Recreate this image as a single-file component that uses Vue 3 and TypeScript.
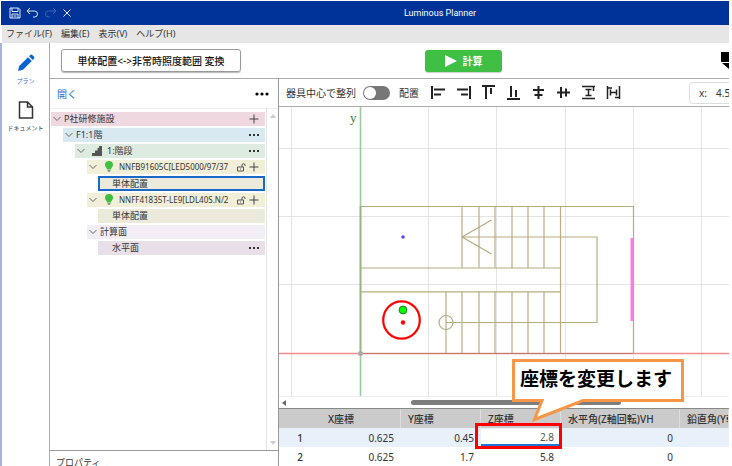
<script setup lang="ts">
import { ref } from 'vue'

interface TreeRow {
  label: string
  kind: string
  indent: number
  arrow?: boolean
  icon?: 'stairs' | 'bulb'
  lock?: boolean
  action?: 'plus' | 'dots'
}

const menus = ['ファイル(F)', '編集(E)', '表示(V)', 'ヘルプ(H)']

const tree: TreeRow[] = [
  { label: 'P社研修施設', kind: 'site', indent: 0, arrow: true, action: 'plus' },
  { label: 'F1:1階', kind: 'floor', indent: 1, arrow: true, action: 'dots' },
  { label: '1:階段', kind: 'room', indent: 2, arrow: true, icon: 'stairs', action: 'dots' },
  { label: 'NNFB91605C[LED5000/97/37', kind: 'lamp', indent: 3, arrow: true, icon: 'bulb', lock: true, action: 'plus' },
  { label: '単体配置', kind: 'single selected', indent: 4 },
  { label: 'NNFF41835T-LE9[LDL40S.N/2', kind: 'lamp', indent: 3, arrow: true, icon: 'bulb', lock: true, action: 'plus' },
  { label: '単体配置', kind: 'single', indent: 4 },
  { label: '計算面', kind: 'calc', indent: 3, arrow: true },
  { label: '水平面', kind: 'plane', indent: 4, action: 'dots' },
]

const aligns = [
  { name: '左揃え', d: 'M1 1v13M3 4.5h11M3 9.5h7' },
  { name: '右揃え', d: 'M14 1v13M1 4.5h11M5 9.5h7' },
  { name: '上揃え', d: 'M1 1h13M5 2v12M10 3v6' },
  { name: '下揃え', d: 'M1 14h13M5 1v11M10 5v7' },
  { name: '左右中央揃え', d: 'M7.5 1v13M2 5h11M3.500 10h8' },
  { name: '上下中央揃え', d: 'M1 7.5h13M5 2v11M10 3.500v8' },
  { name: '上下等間隔', d: 'M1 1.500h13M1 13.500h13M7.500 4v7M4.500 4.500h6M4.500 10.500h6M12.500 2v4' },
  { name: '左右等間隔', d: 'M1.500 1v13M13.500 1v13M4 7.500h7M4.500 4.500v6M10.500 4.500v6M2 3h4M9 12.500h4' },
]

const gridX = [13, 150, 218, 287, 355, 423]
const gridY = [42, 110, 178]
const upperSteps = [183, 200, 216, 233, 249, 265]
const lowerSteps = [167, 183, 200, 216, 233, 249, 265]

const centerAlign = ref(false)
const zValue = ref('2.8')
</script>

<template>
  <div class="app">
    <header class="titlebar">
      <div class="quick">
        <button aria-label="保存">
          <svg width="12" height="12" viewBox="0 0 12 12"><path d="M1 1h8.500L11 2.500V11H1zM3 1v3.500h6V1M3 11V7h6v4M4.500 9h3" /></svg>
        </button>
        <button aria-label="元に戻す">
          <svg width="13" height="12" viewBox="0 0 13 12"><path d="M4 1L1 4l3 3M1 4h7.500a3 3 0 0 1 0 6H7" /></svg>
        </button>
        <button aria-label="やり直し" disabled>
          <svg width="13" height="12" viewBox="0 0 13 12"><path d="M9 1l3 3-3 3M12 4H4.500a3 3 0 0 0 0 6H6" /></svg>
        </button>
        <button aria-label="閉じる">
          <svg width="10" height="12" viewBox="0 0 10 12"><path d="M1.500 2.500l7 7M8.500 2.500l-7 7" /></svg>
        </button>
      </div>
      <h1>Luminous Planner</h1>
    </header>

    <nav class="menubar">
      <button v-for="m in menus" :key="m">{{ m }}</button>
    </nav>

    <div class="body">
      <aside class="rail">
        <button class="rail-item active">
          <svg width="18" height="18" viewBox="0 0 18 18"><path d="M1 17l1.200-5L11 3.200 14.800 7 6 15.800zM12 2.200l1.200-1.200q1-1 2 0l1.800 1.800q1 1 0 2L15.800 6z" fill="#0b63d1" /></svg>
          <span>プラン</span>
        </button>
        <button class="rail-item">
          <svg width="16" height="18" viewBox="0 0 16 18"><path d="M1.500 1h8L14.500 6v11h-13zM9.500 1v5h5" fill="none" stroke="#333" stroke-width="1.500" /></svg>
          <span>ドキュメント</span>
        </button>
      </aside>

      <div class="work">
        <div class="actions">
          <button class="convert">単体配置&lt;-&gt;非常時照度範囲 変換</button>
          <button class="calc-btn">
            <svg width="12" height="12" viewBox="0 0 12 12"><path d="M0 0l12 6-12 6z" fill="#fff" /></svg>
            計算
          </button>
          <svg class="tag" width="8" height="17" viewBox="0 0 8 17"><path d="M0 0h8v10H0zM1 11h7v6z" /></svg>
        </div>

        <div class="panes">
          <section class="explorer">
            <div class="explorer-head">
              <a href="#open">開く</a>
              <button class="more" aria-label="その他">
                <svg width="14" height="4" viewBox="0 0 14 4"><circle cx="2" cy="2" r="1.600" /><circle cx="7" cy="2" r="1.600" /><circle cx="12" cy="2" r="1.600" /></svg>
              </button>
            </div>
            <div class="tree-wrap">
              <ul class="tree">
                <li v-for="(row, i) in tree" :key="i" :class="['row', 'level-' + row.indent, ...row.kind.split(' ')]">
                  <svg v-if="row.arrow" class="chev" width="8" height="6" viewBox="0 0 8 6"><path d="M.5 1L4 4.500 7.500 1" /></svg>
                  <svg v-if="row.icon === 'stairs'" class="row-icon" width="10" height="10" viewBox="0 0 10 10"><path d="M0 10V7h3V4.500h2.500V2H7V0h3v10z" fill="#555" /></svg>
                  <svg v-if="row.icon === 'bulb'" class="row-icon" width="10" height="12" viewBox="0 0 10 12"><path d="M5 0a4 4 0 0 1 4 4c0 2-2 2.500-2 4.500H3C3 6.500 1 6 1 4a4 4 0 0 1 4-4z" fill="#3fbf3f" /><path d="M3.500 9h3v1L5.500 11h-1L3.500 10z" fill="#7a9a7a" /></svg>
                  <span class="label">{{ row.label }}</span>
                  <svg v-if="row.lock" class="lock" width="9" height="9" viewBox="0 0 9 9"><path d="M.5 4h6v4h-6zM5 4V1.500q1.500-1.500 3 0V3M3.500 5.500v1" /></svg>
                  <button v-if="row.action" class="row-btn" :aria-label="row.action === 'plus' ? '追加' : '操作'">
                    <svg v-if="row.action === 'plus'" width="10" height="10" viewBox="0 0 10 10"><path d="M5 .5v9M.5 5h9" fill="none" stroke="#444" /></svg>
                    <svg v-else width="10" height="10" viewBox="0 0 10 10"><path d="M0 4h2v2H0zM4 4h2v2H4zM8 4h2v2H8z" fill="#333" /></svg>
                  </button>
                </li>
              </ul>
              <div class="tree-scroll">
                <svg width="6" height="4" viewBox="0 0 6 4"><path d="M3 0l3 4H0z" fill="#ccc" /></svg>
                <svg width="6" height="4" viewBox="0 0 6 4"><path d="M0 0h6L3 4z" fill="#ccc" /></svg>
              </div>
            </div>
            <div class="props">プロパティ</div>
          </section>

          <section class="editor">
            <div class="toolbar">
              <label class="switch">
                器具中心で整列
                <input v-model="centerAlign" type="checkbox" />
                <span class="track"></span>
              </label>
              <span class="group">配置</span>
              <div class="aligns">
                <button v-for="a in aligns" :key="a.name" :aria-label="a.name">
                  <svg width="15" height="15" viewBox="0 0 15 15"><path :d="a.d" /></svg>
                </button>
              </div>
              <div class="coord"><span>x:</span><span>4.57</span></div>
            </div>

            <div class="canvas">
              <svg width="451" height="289" viewBox="0 0 451 289">
                <g stroke="#e4e4e4">
                  <line v-for="x in gridX" :key="'x' + x" :x1="x - 0.500" :x2="x - 0.500" y1="0" y2="289" />
                  <line v-for="y in gridY" :key="'y' + y" x1="0" x2="451" :y1="y - 0.500" :y2="y - 0.500" />
                </g>
                <path d="M81.500 0V289" stroke="#9cca9e" stroke-width="1.600" />
                <g fill="none" stroke="#b5ac82" stroke-width="1.200">
                  <path d="M81.500 246.500V99.500H354.500V246.500" />
                  <path d="M81.500 161H281.500M81.500 184.800H281.500M281.500 99.500V246.500" />
                  <path v-for="x in upperSteps" :key="'u' + x" :d="`M${x} 99.500V161`" />
                  <path v-for="x in lowerSteps" :key="'l' + x" :d="`M${x} 184.800V246.500`" />
                  <path d="M212.500 113L183 130l29.500 17M183 130H318V215.500H167" />
                  <circle cx="167" cy="215.500" r="7" />
                </g>
                <path d="M0 246.500H451" stroke="#f28c8c" stroke-width="1.400" />
                <path d="M81.500 246.500H354" stroke="#bd7d66" stroke-width="1.200" />
                <path d="M81.500 246.500V99" stroke="#97b583" stroke-width="1.600" />
                <circle cx="81.500" cy="246.500" r="2.500" fill="#aaa" />
                <path d="M353 131V214" stroke="#fb7fdf" stroke-width="3" />
                <circle cx="124" cy="130" r="1.800" fill="#4a52ff" />
                <ellipse cx="122.500" cy="213" rx="18.300" ry="18.700" fill="none" stroke="#f00" stroke-width="2.200" />
                <circle cx="124" cy="203" r="3.900" fill="#0f0" stroke="#277527" />
                <circle cx="124" cy="215.500" r="2.200" fill="#f00" />
                <text x="71" y="15" class="axis">y</text>
              </svg>
            </div>

            <div class="hscroll">
              <svg width="4" height="6" viewBox="0 0 4 6"><path d="M4 0v6L0 3z" fill="#666" /></svg>
              <span class="thumb"></span>
            </div>

            <div class="grid-wrap">
              <table>
                <colgroup>
                  <col class="c-no" /><col class="c-x" /><col class="c-y" /><col class="c-z" /><col class="c-h" /><col class="c-v" />
                </colgroup>
                <thead>
                  <tr>
                    <th></th><th>X座標</th><th>Y座標</th><th>Z座標</th><th>水平角(Z軸回転)VH</th><th>鉛直角(Y軸回転)</th>
                  </tr>
                </thead>
                <tbody>
                  <tr class="current">
                    <th>1</th><td>0.625</td><td>0.45</td>
                    <td class="edit"><input v-model="zValue" aria-label="Z座標" /></td>
                    <td>0</td><td></td>
                  </tr>
                  <tr>
                    <th>2</th><td>0.625</td><td>1.7</td><td>5.8</td><td>0</td><td></td>
                  </tr>
                </tbody>
              </table>
              <div class="callout">
                <svg width="172" height="64" viewBox="0 0 172 64"><path d="M1.500 1.500H170.500V41.500H71L22.500 60.500 30 41.500H1.500z" fill="#fff" stroke="#f79646" stroke-width="3" /></svg>
                <strong>座標を変更します</strong>
              </div>
            </div>
          </section>
        </div>
      </div>
    </div>
  </div>
</template>

<style>
body {
  margin: 0;
  background: #fff;
  overflow: hidden;
}
</style>

<style scoped>
* {
  box-sizing: border-box;
}

.app {
  display: flex;
  flex-direction: column;
  height: 100vh;
  padding: 1px 3px 0 0;
  font-family: "Noto Sans", "Noto Sans CJK JP", sans-serif;
  font-size: 10px;
  line-height: 14px;
  color: #333;
  overflow: hidden;
}

button {
  display: flex;
  align-items: center;
  justify-content: center;
  padding: 0;
  border: 0;
  background: none;
  font: inherit;
  color: inherit;
  white-space: nowrap;
}

svg {
  display: block;
  flex: none;
}

.titlebar {
  flex: none;
  display: grid;
  grid-template-columns: 1fr auto 1fr;
  align-items: center;
  height: 24px;
  margin-left: 1px;
  padding-left: 8px;
  padding-right: 2px;
  background: #039;
  color: #fff;
}

.quick {
  display: flex;
  gap: 5px;
}

.quick path {
  fill: none;
  stroke: #dfe7fa;
}

.quick button:disabled path {
  stroke: #3864b5;
}

.titlebar h1 {
  grid-column: 2;
  margin: 0 0 0 144px;
  font-family: Roboto, sans-serif;
  font-size: 9px;
  font-weight: 400;
}

.menubar {
  flex: none;
  display: flex;
  gap: 9px;
  height: 18px;
  margin-left: 2px;
  padding-left: 4px;
  background: #e6e6e6;
  font-size: 9px;
}

.body {
  flex: 1;
  display: flex;
  min-height: 0;
  border-left: 2px solid #a3b4e0;
}

.rail {
  flex: none;
  display: flex;
  flex-direction: column;
  gap: 14px;
  width: 47px;
  padding-top: 11px;
}

.rail-item {
  flex-direction: column;
  gap: 3px;
  font-size: 6px;
  line-height: 12px;
}

.rail-item.active {
  color: #1a75d6;
}

.work {
  flex: 1;
  display: flex;
  flex-direction: column;
  min-width: 0;
  border-left: 1px solid #aaa;
}

.actions {
  flex: none;
  display: flex;
  align-items: center;
  height: 36px;
  padding-left: 11px;
  border-bottom: 1px solid #aaa;
}

.convert {
  width: 180px;
  height: 23px;
  border: 1px solid #999;
  border-radius: 3px;
  box-shadow: 0 1px 1px #bbb;
  color: #111;
  font-weight: 500;
}

.calc-btn {
  gap: 6px;
  width: 77px;
  height: 22px;
  margin-left: 184px;
  border-radius: 3px;
  background: #3fbf43;
  box-shadow: 0 1px 1px #ccc;
  color: #fff;
  font-weight: 700;
}

.tag {
  margin-left: auto;
}

.panes {
  flex: 1;
  display: flex;
  min-height: 0;
}

.explorer {
  flex: none;
  display: flex;
  flex-direction: column;
  width: 229px;
  border-right: 1px solid #999;
}

.explorer-head {
  flex: none;
  display: flex;
  align-items: center;
  justify-content: space-between;
  height: 30px;
  padding: 0 9px 0 7px;
  border-bottom: 1px solid #eee;
}

.explorer-head a {
  color: #1a75d6;
  text-decoration: none;
}

.tree-wrap {
  flex: 1;
  display: flex;
  min-height: 0;
}

.tree {
  flex: 1;
  display: flex;
  flex-direction: column;
  gap: 2px;
  min-width: 0;
  margin: 0;
  padding: 3px 1px 0 1px;
  list-style: none;
}

.row {
  flex: none;
  display: flex;
  align-items: center;
  height: 14px;
  padding: 0 6px 0 2px;
  font-size: 9px;
  white-space: nowrap;
}

.level-1 { margin-left: 12px; }
.level-2 { margin-left: 24px; }
.level-3 { margin-left: 36px; }
.level-4 { margin-left: 47px; }

.site { background: #efd8e0; }
.floor { background: #d9e9f2; }
.room { background: #deebe1; }
.lamp { background: #f2efd8; font-size: 8px; }
.single { background: #eceadb; }
.calc { background: #f3eef5; }
.plane { background: #e8dfe9; }

.level-4 {
  padding-left: 14px;
}

.selected {
  height: 15px;
  padding-left: 12px;
  border: 2px solid #1b68c9;
}

.chev {
  margin-right: 3px;
}

.chev path {
  fill: none;
  stroke: #666;
}

.row-icon {
  margin-left: 4px;
  margin-right: 5px;
}

.label {
  flex: 1;
}

.lock {
  margin-right: 3px;
}

.lock path {
  fill: none;
  stroke: #555;
}

.tree-scroll {
  flex: none;
  display: flex;
  flex-direction: column;
  align-items: center;
  justify-content: space-between;
  width: 12px;
  padding: 5px 0;
  border-left: 1px solid #e4e4e4;
}

.props {
  flex: none;
  height: 16px;
  padding: 5px 0 0 6px;
  border-top: 1px solid #999;
  font-size: 9px;
}

.editor {
  flex: 1;
  display: flex;
  flex-direction: column;
  min-width: 0;
}

.toolbar {
  flex: none;
  display: flex;
  align-items: center;
  height: 28px;
  padding-left: 7px;
  border-bottom: 1px solid #aaa;
  overflow: hidden;
  white-space: nowrap;
}

.switch {
  display: flex;
  align-items: center;
  gap: 7px;
}

.switch input {
  position: absolute;
  opacity: 0;
}

.track {
  display: flex;
  width: 27px;
  height: 14px;
  padding: 1px;
  border-radius: 7px;
  background: #777;
}

.track::before {
  content: "";
  width: 12px;
  height: 12px;
  border-radius: 50%;
  background: #fff;
}

.switch input:checked + .track {
  justify-content: flex-end;
  background: #1a75d6;
}

.group {
  margin-left: 9px;
}

.aligns {
  display: flex;
  gap: 10px;
  margin-left: 12px;
}

.aligns path {
  fill: none;
  stroke: #222;
  stroke-width: 2;
}

.aligns button:nth-child(n + 7) path {
  stroke-width: 1.5;
}

.coord {
  flex: none;
  display: flex;
  gap: 9px;
  width: 80px;
  height: 22px;
  margin-left: 68px;
  padding: 3px 9px;
  border: 1px solid #ddd;
  border-radius: 4px;
}

.canvas {
  flex: 1;
  min-height: 0;
  overflow: hidden;
}

.axis {
  font-family: "Liberation Serif", serif;
  font-size: 13px;
  fill: #338038;
}

.hscroll {
  flex: none;
  display: flex;
  align-items: center;
  height: 12px;
  padding-left: 3px;
  border-top: 1px solid #eee;
}

.thumb {
  width: 47%;
  height: 5px;
  margin-left: 125px;
  border-radius: 3px;
  background: #7d7d7d;
}

.grid-wrap {
  position: relative;
  flex: none;
  height: 58px;
  border-top: 1px solid #888;
}

table {
  width: 100%;
  table-layout: fixed;
  border-collapse: separate;
  border-spacing: 0;
}

.c-no { width: 42px; }
.c-x { width: 80px; }
.c-y { width: 80px; }
.c-z { width: 80px; }
.c-h { width: 119px; }

tr {
  height: 19px;
}

th,
td {
  padding: 0 7px;
  text-align: right;
  white-space: nowrap;
  overflow: hidden;
}

th {
  text-align: center;
  font-weight: 500;
}

thead tr {
  background: #cbcbcb;
}

thead th {
  border-right: 1px solid #ddd;
  text-align: left;
}

thead th:first-child {
  border-right: 0;
}

.current {
  background: #e8f0fa;
}

td.edit {
  padding: 0;
}

.edit input {
  display: block;
  width: 100%;
  height: 17px;
  padding: 0 7px 0 0;
  border: 0;
  border-bottom: 2px solid #1b74d6;
  outline: 0;
  background: #fff;
  font: inherit;
  color: #555;
  text-align: right;
}

.grid-wrap::after {
  content: "";
  position: absolute;
  left: 196px;
  top: 14px;
  box-sizing: border-box;
  width: 87px;
  height: 26px;
  border: 3px solid #f00;
  pointer-events: none;
}

.callout {
  position: absolute;
  z-index: 1;
  left: 233px;
  top: -50px;
}

.callout strong {
  position: absolute;
  left: 8px;
  top: 8px;
  font-size: 19px;
  line-height: 24px;
  color: #000;
  white-space: nowrap;
}
</style>
